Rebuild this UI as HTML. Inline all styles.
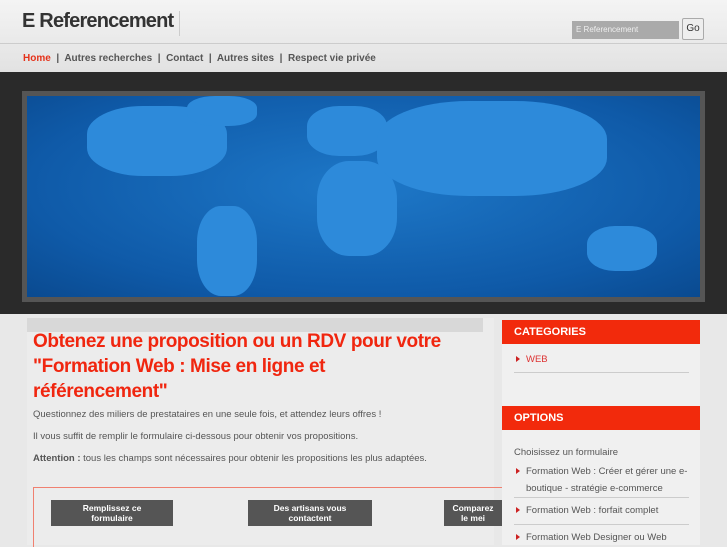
<!DOCTYPE html><html><head><meta charset="utf-8"><style>
*{margin:0;padding:0;box-sizing:border-box}
body{width:727px;height:545px;overflow:hidden;background:#e8e8e8;font-family:"Liberation Sans",sans-serif;position:relative}
.a{position:absolute}
.hd{left:0;top:0;width:727px;height:72px;background:linear-gradient(#f4f4f4,#e2e2e2)}
.logo{left:22px;top:10px;font-size:20px;font-weight:bold;color:#333;letter-spacing:-0.8px}
.nav{left:23px;top:53px;font-size:10px;font-weight:bold;color:#555}
.nav b{color:#e5321a}
.dark{left:0;top:72px;width:727px;height:242px;background:#2a2a2a}
.map{left:22px;top:91px;width:683px;height:211px;background:#555;padding:5px}
.map>div{width:100%;height:100%;background:radial-gradient(ellipse at 50% 45%,#1e78c8,#0f5aa8 70%,#0a4a90);position:relative;overflow:hidden}
.c{position:absolute;background:#2d8ada;border-radius:40%}
.main{left:27px;top:318px;width:467px;height:227px;background:#ececec}
.h1{left:33px;top:329px;font-size:19px;font-weight:bold;color:#f0260f;line-height:25px;width:460px;letter-spacing:-0.4px;white-space:nowrap}
.p{font-size:9.5px;color:#555;left:33px}
.side{left:502px;width:198px;background:#f0f0f0}
.bar{background:#f22a0c;color:#fff;font-size:11px;font-weight:bold;padding:0 12px;height:24px;line-height:24px}
.li{font-size:9.5px;color:#555;position:absolute;left:24px;line-height:17px}
.li:before{content:"";position:absolute;left:-10px;top:5px;border-left:4px solid #c22;border-top:3px solid transparent;border-bottom:3px solid transparent}
.step{background:#555;color:#fff;height:26px;font-size:8.5px;font-weight:bold;text-align:center;line-height:10px;padding-top:3px}
</style></head><body>
<div class="a hd"></div>
<div class="a" style="left:0;top:43px;width:727px;height:1px;background:#ccc"></div>
<div class="a" style="left:179px;top:11px;width:1px;height:25px;background:#ccc"></div>
<div class="a logo">E Referencement</div>
<div class="a" style="left:572px;top:21px;width:107px;height:18px;background:#aaa;color:#eee;font-size:8px;line-height:18px;padding-left:4px">E Referencement</div>
<div class="a" style="left:682px;top:18px;width:22px;height:22px;background:#eee;border:1px solid #aaa;border-radius:2px;font-size:10px;line-height:20px;text-align:center;color:#333">Go</div>
<div class="a nav"><b>Home</b> &nbsp;|&nbsp; Autres recherches &nbsp;|&nbsp; Contact &nbsp;|&nbsp; Autres sites &nbsp;|&nbsp; Respect vie privée</div>
<div class="a dark"></div>
<div class="a map"><div>
<div class="c" style="left:60px;top:10px;width:140px;height:70px"></div>
<div class="c" style="left:160px;top:0;width:70px;height:30px"></div>
<div class="c" style="left:170px;top:110px;width:60px;height:90px"></div>
<div class="c" style="left:280px;top:10px;width:80px;height:50px"></div>
<div class="c" style="left:290px;top:65px;width:80px;height:95px"></div>
<div class="c" style="left:350px;top:5px;width:230px;height:95px"></div>
<div class="c" style="left:560px;top:130px;width:70px;height:45px"></div>
</div></div>
<div class="a main"></div>
<div class="a" style="left:27px;top:318px;width:456px;height:14px;background:#d8d8d8"></div>
<div class="a h1">Obtenez une proposition ou un RDV pour votre<br>"Formation Web : Mise en ligne et<br>référencement"</div>
<div class="a p" style="top:409px">Questionnez des miliers de prestataires en une seule fois, et attendez leurs offres !</div>
<div class="a p" style="top:431px">Il vous suffit de remplir le formulaire ci-dessous pour obtenir vos propositions.</div>
<div class="a p" style="top:453px"><b>Attention :</b> tous les champs sont nécessaires pour obtenir les propositions les plus adaptées.</div>
<div class="a" style="left:33px;top:487px;width:470px;height:60px;border:1px solid #f08070;border-right:none;border-bottom:none"></div>
<div class="a step" style="left:51px;top:500px;width:122px">Remplissez ce<br>formulaire</div>
<div class="a step" style="left:248px;top:500px;width:124px">Des artisans vous<br>contactent</div>
<div class="a step" style="left:444px;top:500px;width:58px">Comparez<br>le mei</div>
<div class="a side" style="top:320px;height:90px"><div class="bar">CATEGORIES</div><div class="li" style="top:31px;color:#d33">WEB</div><div class="a" style="left:12px;top:52px;width:175px;height:1px;background:#ccc"></div></div>
<div class="a side" style="top:406px;height:139px"><div class="bar">OPTIONS</div>
<div class="a" style="left:12px;top:38px;font-size:9.5px;color:#555;line-height:17px">Choisissez un formulaire</div>
<div class="li" style="top:57px;width:165px">Formation Web : Créer et gérer une e-boutique - stratégie e-commerce</div>
<div class="a" style="left:12px;top:91px;width:175px;height:1px;background:#ccc"></div>
<div class="li" style="top:96px">Formation Web : forfait complet</div>
<div class="a" style="left:12px;top:118px;width:175px;height:1px;background:#ccc"></div>
<div class="li" style="top:123px">Formation Web Designer ou Web</div></div>
</body></html>
